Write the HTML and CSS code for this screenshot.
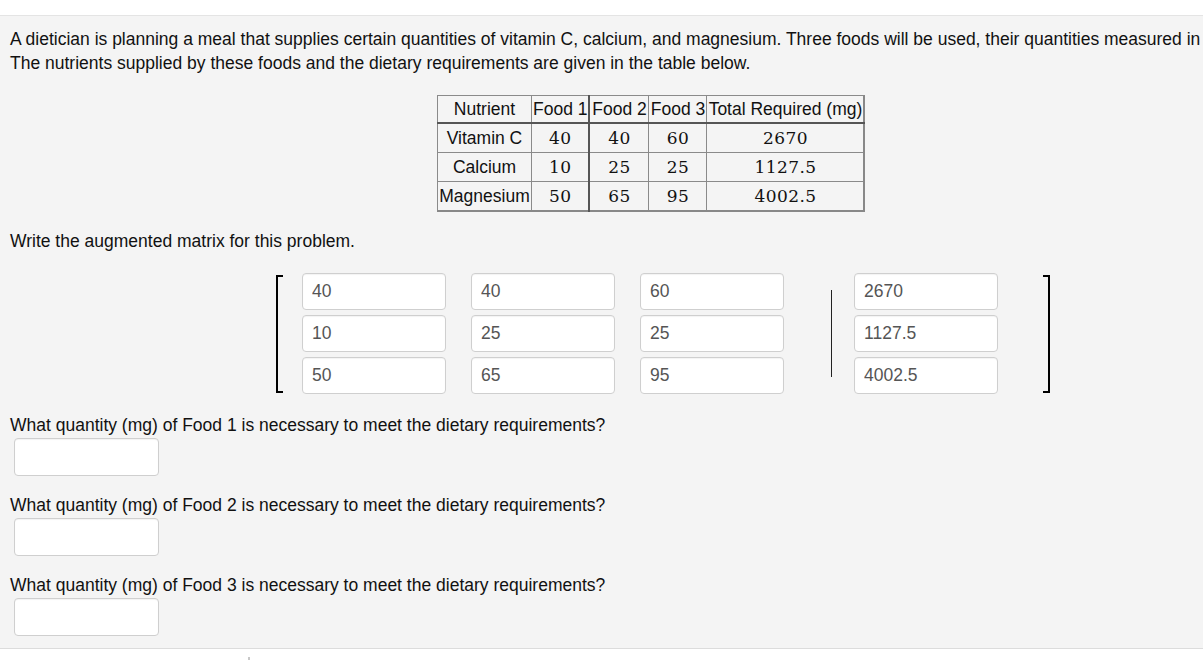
FILE: index.html
```html
<!DOCTYPE html>
<html>
<head>
<meta charset="utf-8">
<link rel="stylesheet" href="styles.css">
</head>
<body>
<div class="topbar"></div>
<main class="panel">
  <div class="content">
    <p class="intro">A dietician is planning a meal that supplies certain quantities of vitamin C, calcium, and magnesium. Three foods will be used, their quantities measured in<br>The nutrients supplied by these foods and the dietary requirements are given in the table below.</p>
    <table class="nutri">
      <thead>
        <tr><th class="c-n">Nutrient</th><th class="c-f1">Food 1</th><th class="c-f">Food 2</th><th class="c-f3">Food 3</th><th class="c-t">Total Required (mg)</th></tr>
      </thead>
      <tbody>
        <tr><td class="c-n">Vitamin C</td><td class="num c-f1">40</td><td class="num">40</td><td class="num">60</td><td class="num">2670</td></tr>
        <tr><td class="c-n">Calcium</td><td class="num c-f1">10</td><td class="num">25</td><td class="num">25</td><td class="num">1127.5</td></tr>
        <tr><td class="c-n">Magnesium</td><td class="num c-f1">50</td><td class="num">65</td><td class="num">95</td><td class="num">4002.5</td></tr>
      </tbody>
    </table>
    <p class="prompt">Write the augmented matrix for this problem.</p>
    <div class="matrix">
      <div class="bracket left"></div>
      <div class="coef">
        <input class="cell" value="40"><input class="cell" value="40"><input class="cell" value="60">
        <input class="cell" value="10"><input class="cell" value="25"><input class="cell" value="25">
        <input class="cell" value="50"><input class="cell" value="65"><input class="cell" value="95">
      </div>
      <div class="bar"></div>
      <div class="rhs">
        <input class="cell" value="2670">
        <input class="cell" value="1127.5">
        <input class="cell" value="4002.5">
      </div>
      <div class="bracket right"></div>
    </div>
    <div class="question">
      <p class="prompt q">What quantity (mg) of Food 1 is necessary to meet the dietary requirements?</p>
      <input class="answer">
    </div>
    <div class="question">
      <p class="prompt q">What quantity (mg) of Food 2 is necessary to meet the dietary requirements?</p>
      <input class="answer">
    </div>
    <div class="question">
      <p class="prompt q">What quantity (mg) of Food 3 is necessary to meet the dietary requirements?</p>
      <input class="answer">
    </div>
  </div>
</main>
<div class="footer"><span class="tick"></span></div>
</body>
</html>
```
FILE: styles.css
```css
html, body {
  margin: 0;
  padding: 0;
  background: #fff;
  overflow: hidden;
  width: 1203px;
  height: 660px;
  font-family: "Liberation Sans", Arial, sans-serif;
  font-size: 17.5px;
  color: #111;
}

.topbar {
  height: 15px;
  background: #fff;
  border-bottom: 1px solid #e4e4e4;
  box-shadow: 0 1px 2px rgba(0,0,0,0.04);
}

.panel {
  display: block;
  background: #f4f4f4;
  height: 632px;
  border-bottom: 1px solid #dcdcdc;
  overflow: hidden;
}

.content {
  width: 1301px;
  box-sizing: border-box;
  padding: 11px 10px 0 10px;
}

.intro {
  margin: 0;
  line-height: 24px;
  white-space: nowrap;
}

.nutri {
  margin: 20px 0 0 427px;
  border-collapse: collapse;
  border: 1px solid #7a7a7a;
  border-right: 2px solid #888;
  border-bottom: 2px solid #888;
}

.nutri th, .nutri td {
  border: 1px solid #8a8a8a;
  padding: 0 1px;
  height: 28px;
  text-align: center;
  font-weight: normal;
  white-space: nowrap;
  color: #111;
}

.nutri thead th {
  border-bottom: 2px solid #555;
  height: 26px;
}

.nutri .c-n { width: 91px; }
.nutri .c-f1 { width: 54px; border-right: 2px solid #555; }
.nutri .c-f { width: 56px; }
.nutri .c-f3 { width: 55px; }
.nutri .c-t { width: 154px; }

.nutri td.num {
  font-family: "DejaVu Serif", "Liberation Serif", serif;
  font-size: 17px;
  letter-spacing: 0.4px;
}

.prompt {
  margin: 17px 0 0 0;
  line-height: 24px;
}

.matrix {
  display: flex;
  align-items: center;
  margin: 20px 0 0 266px;
}

.bracket {
  width: 5px;
  height: 114px;
  border: 2px solid #000;
}
.bracket.left { border-right: none; margin-right: 19px; }
.bracket.right { border-left: none; margin-left: 45px; }

.coef {
  display: grid;
  grid-template-columns: repeat(3, 144px);
  column-gap: 25px;
  row-gap: 5px;
}

.rhs {
  display: grid;
  grid-template-columns: 144px;
  row-gap: 5px;
}

.cell, .answer {
  box-sizing: border-box;
  height: 37px;
  margin: 0;
  border: 1px solid #cfcfcf;
  border-radius: 4px;
  background: #fff;
  box-shadow: inset 0 1px 1px rgba(0,0,0,0.05);
  font-family: "Liberation Sans", Arial, sans-serif;
  font-size: 17.5px;
  color: #555;
  padding: 0 9px;
  outline: none;
}

.cell { width: 144px; }

.bar {
  width: 1px;
  height: 87px;
  background: #222;
  margin: 0 22px 0 47px;
}

.question .q {
  margin-top: 19px;
}
.question + .question .q {
  margin-top: 17px;
}

.answer {
  display: block;
  width: 145px;
  height: 38px;
  margin: 1px 0 0 4px;
}

.footer {
  position: relative;
  height: 11px;
  background: #fff;
}
.tick {
  position: absolute;
  left: 248px;
  top: 8px;
  width: 2px;
  height: 3px;
  background: #c8c8c8;
}
```
